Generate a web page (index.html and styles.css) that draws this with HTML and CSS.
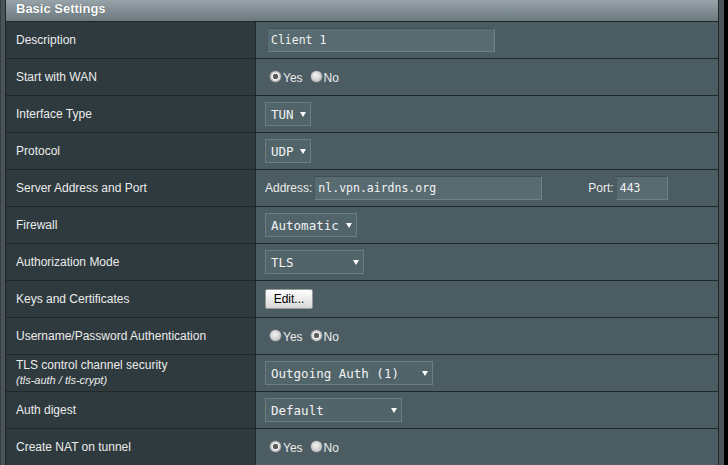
FILE: index.html
```html
<!DOCTYPE html>
<html>
<head>
<meta charset="utf-8">
<link rel="stylesheet" href="styles.css">
</head>
<body>
<div class="frame">
  <div class="table">
    <div class="head">Basic Settings</div>

    <div class="label">Description</div>
    <div class="field"><div class="input input-wide">Client 1</div></div>

    <div class="label">Start with WAN</div>
    <div class="field"><div class="radios"><span class="radio on"></span><span class="rlabel">Yes</span><span class="radio"></span><span class="rlabel">No</span></div></div>

    <div class="label">Interface Type</div>
    <div class="field"><div class="select w46"><span>TUN</span><i class="arrow"></i></div></div>

    <div class="label">Protocol</div>
    <div class="field"><div class="select w46"><span>UDP</span><i class="arrow"></i></div></div>

    <div class="label">Server Address and Port</div>
    <div class="field"><span class="flabel">Address:</span><div class="input input-addr">nl.vpn.airdns.org</div><span class="flabel port">Port:</span><div class="input input-port">443</div></div>

    <div class="label">Firewall</div>
    <div class="field"><div class="select w92"><span>Automatic</span><i class="arrow"></i></div></div>

    <div class="label">Authorization Mode</div>
    <div class="field"><div class="select w99"><span>TLS</span><i class="arrow"></i></div></div>

    <div class="label">Keys and Certificates</div>
    <div class="field"><div class="button">Edit...</div></div>

    <div class="label">Username/Password Authentication</div>
    <div class="field"><div class="radios"><span class="radio"></span><span class="rlabel">Yes</span><span class="radio on"></span><span class="rlabel">No</span></div></div>

    <div class="label label-two"><span>TLS control channel security</span><span class="sub">(tls-auth / tls-crypt)</span></div>
    <div class="field"><div class="select w168"><span>Outgoing Auth (1)</span><i class="arrow"></i></div></div>

    <div class="label">Auth digest</div>
    <div class="field"><div class="select w137"><span>Default</span><i class="arrow"></i></div></div>

    <div class="label">Create NAT on tunnel</div>
    <div class="field"><div class="radios"><span class="radio on"></span><span class="rlabel">Yes</span><span class="radio"></span><span class="rlabel">No</span></div></div>
  </div>
</div>
</body>
</html>
```
FILE: styles.css
```css
html, body {
  margin: 0;
  padding: 0;
  background: #000;
  height: 465px;
  overflow: hidden;
}
.frame {
  width: 724px;
  height: 465px;
  box-sizing: border-box;
  border-left: 1px solid #353d40;
  padding: 0 5px 0 4px;
  background: #4b5457;
  overflow: hidden;
}
.table {
  display: grid;
  grid-template-columns: 249px 462px;
  grid-template-rows: 21px repeat(12, 36px);
  gap: 1px;
  background: #1f2729;
  border-left: 1px solid #1f2729;
  border-right: 1px solid #1f2729;
  font-family: "Liberation Sans", Arial, sans-serif;
  font-size: 12px;
  color: #f0f0f0;
}
.head {
  grid-column: 1 / 3;
  padding-left: 10px;
  line-height: 17px;
  font-weight: bold;
  font-size: 13px;
  color: #fff;
  text-shadow: 0 0 1px #3a4448;
  background: linear-gradient(#97a3a8, #6c7a7f);
}
.label {
  background: #2e3a3e;
  padding-left: 10px;
  display: flex;
  align-items: center;
  color: #ececec;
}
.label-two {
  flex-direction: column;
  align-items: flex-start;
  justify-content: center;
  line-height: 15px;
  padding-bottom: 1px;
}
.label-two .sub {
  font-style: italic;
  font-size: 11px;
}
.field {
  background: #4b5c62;
  padding-left: 9px;
  display: flex;
  align-items: center;
}
.input {
  height: 24px;
  box-sizing: border-box;
  border: 1px solid #6f8187;
  border-top-color: #3f4f54;
  border-left-color: #4a5a60;
  background: #586b71;
  font-family: "DejaVu Sans Mono", monospace;
  font-size: 11.5px;
  color: #f2f2f2;
  line-height: 22px;
  padding-left: 3px;
}
.input-wide { width: 228px; margin-left: 2px; }
.input-addr { width: 228px; margin-left: 2px; }
.input-port { width: 52px; margin-left: 2px; }
.flabel { color: #ececec; }
.flabel.port { margin-left: 46px; }
.select {
  height: 24px;
  box-sizing: border-box;
  border: 1px solid #6c7e84;
  background: #51646a;
  display: flex;
  align-items: center;
  justify-content: space-between;
  padding: 0 4px 0 5px;
  font-family: "DejaVu Sans Mono", monospace;
  font-size: 12.5px;
  color: #f2f2f2;
}
.arrow {
  width: 0;
  height: 0;
  border-left: 3px solid transparent;
  border-right: 3px solid transparent;
  border-top: 5px solid #fff;
  margin-top: 1px;
}
.w46 { width: 46px; }
.w92 { width: 92px; }
.w99 { width: 99px; }
.w168 { width: 168px; }
.w137 { width: 137px; }
.radios {
  display: flex;
  align-items: center;
  padding-left: 5px;
  margin-top: -2px;
}
.radio {
  width: 11px;
  height: 11px;
  border-radius: 50%;
  background: radial-gradient(circle at 45% 40%, #f4f4f4 0, #d6d6d6 45%, #a9a9a9 100%);
  box-shadow: 0 0 0 0.5px #8a8a8a;
}
.radio.on {
  background: radial-gradient(circle, #5c5c5c 0, #5c5c5c 2.4px, #f2f2f2 3px, #d0d0d0 4.5px, #a0a0a0 6px);
}
.rlabel {
  margin-left: 2px;
  margin-right: 8px;
  margin-top: 3px;
  color: #ececec;
}
.button {
  width: 48px;
  height: 20px;
  box-sizing: border-box;
  border: 1px solid #9a9a9a;
  border-radius: 2px;
  background: linear-gradient(#ffffff, #d8d8d8);
  color: #000;
  text-align: center;
  line-height: 18px;
  font-size: 12px;
}
```
